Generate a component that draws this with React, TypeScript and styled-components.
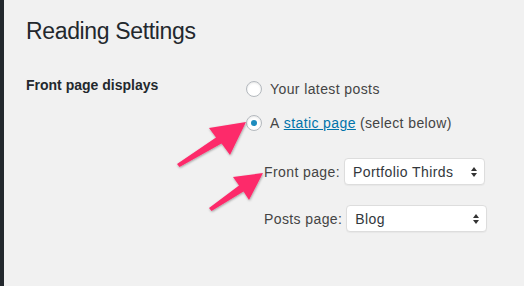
import React, { useState } from 'react';
import styled, { createGlobalStyle } from 'styled-components';

const GlobalStyle = createGlobalStyle`
    html, body {
        margin: 0;
        padding: 0;
        background: #f1f1f1;
    }
    body {
        font-family: 'Liberation Sans', Arial, sans-serif;
        -webkit-font-smoothing: antialiased;
    }
`;

const Page = styled.div`
    position: relative;
    width: 524px;
    height: 286px;
    display: flex;
    overflow: hidden;
    background: #f1f1f1;
`;

const AdminMenuEdge = styled.div`
    width: 4px;
    flex-shrink: 0;
    background: #23282d;
`;

const Wrap = styled.div`
    flex: 1;
    padding: 16px 0 0 22px;
`;

const Heading = styled.h1`
    margin: 0;
    font-size: 23px;
    line-height: 30px;
    font-weight: 400;
    color: #23282d;
    letter-spacing: -0.35px;
`;

const FormRow = styled.div`
    display: grid;
    grid-template-columns: 220px 1fr;
    margin-top: 29px;
`;

const RowTitle = styled.div`
    font-size: 14px;
    line-height: 20px;
    font-weight: 700;
    color: #23282d;
`;

const Field = styled.div`
    padding-top: 4px;
    display: flex;
    flex-direction: column;
`;

const RadioRow = styled.label`
    display: flex;
    align-items: center;
    height: 20px;
    margin-bottom: 14px;
    font-size: 14px;
    line-height: 20px;
    color: #444;
    letter-spacing: 0.4px;
    cursor: pointer;
`;

const RadioCircle = styled.span<{ $checked?: boolean }>`
    width: 14px;
    height: 14px;
    border: 1px solid #b4b9be;
    border-radius: 50%;
    background: #fff;
    box-shadow: inset 0 1px 2px rgba(0, 0, 0, 0.1);
    margin-right: 8px;
    display: flex;
    align-items: center;
    justify-content: center;
    flex-shrink: 0;

    &::before {
        content: '';
        width: 6px;
        height: 6px;
        border-radius: 50%;
        background: #1e8cbe;
        display: ${(p) => (p.$checked ? 'block' : 'none')};
    }
`;

const Link = styled.a`
    color: #0073aa;
    text-decoration: underline;
    margin: 0 4px;
`;

const SelectList = styled.div`
    display: flex;
    flex-direction: column;
    gap: 20px;
    margin-top: 11px;
    padding-left: 18px;
`;

const SelectRow = styled.div`
    display: flex;
    align-items: center;
    font-size: 14px;
    line-height: 20px;
    color: #444;
    letter-spacing: 0.4px;
`;

const SelectBox = styled.div`
    box-sizing: border-box;
    width: 141px;
    height: 27px;
    margin-left: 4px;
    padding: 0 7px 0 8px;
    display: flex;
    align-items: center;
    justify-content: space-between;
    background: #fff;
    border: 1px solid #ddd;
    border-radius: 4px;
    box-shadow: 0 1px 1px rgba(0, 0, 0, 0.04);
    color: #32373c;
    font-size: 14px;
    letter-spacing: 0.4px;
`;

const Overlay = styled.svg`
    position: absolute;
    left: 0;
    top: 0;
    pointer-events: none;
`;

const UpDown = () => (
    <svg width="6" height="10" viewBox="0 0 6 10">
        <path d="M0 4 L3 0 L6 4 Z M0 6 L3 10 L6 6 Z" fill="#333" />
    </svg>
);

const Select = ({ value }: { value: string }) => (
    <SelectBox>
        <span>{value}</span>
        <UpDown />
    </SelectBox>
);

export default function App() {
    const [choice, setChoice] = useState<'posts' | 'page'>('page');

    return (
        <Page>
            <GlobalStyle />
            <AdminMenuEdge />
            <Wrap>
                <Heading>Reading Settings</Heading>
                <FormRow>
                    <RowTitle>Front page displays</RowTitle>
                    <Field>
                        <RadioRow onClick={() => setChoice('posts')}>
                            <RadioCircle $checked={choice === 'posts'} />
                            Your latest posts
                        </RadioRow>
                        <RadioRow onClick={() => setChoice('page')}>
                            <RadioCircle $checked={choice === 'page'} />
                            A<Link href="#">static page</Link>(select below)
                        </RadioRow>
                        <SelectList>
                            <SelectRow>
                                Front page:
                                <Select value="Portfolio Thirds" />
                            </SelectRow>
                            <SelectRow>
                                Posts page:
                                <Select value="Blog" />
                            </SelectRow>
                        </SelectList>
                    </Field>
                </FormRow>
            </Wrap>
            <Overlay width="524" height="286" viewBox="0 0 524 286">
                <defs>
                    <filter id="arrowShadow" x="-20%" y="-20%" width="140%" height="140%">
                        <feDropShadow dx="0.5" dy="1" stdDeviation="0.8" floodColor="#000" floodOpacity="0.35" />
                    </filter>
                </defs>
                <g fill="#fd2c6b" filter="url(#arrowShadow)">
                    <polygon points="246,122 209,128 216,137.5 177,164 179.5,167 221.5,143.5 230,155" />
                    <polygon points="263,173 233,177 239,185.5 209,208 211.5,211 243.5,191.5 249,200" />
                </g>
            </Overlay>
        </Page>
    );
}
